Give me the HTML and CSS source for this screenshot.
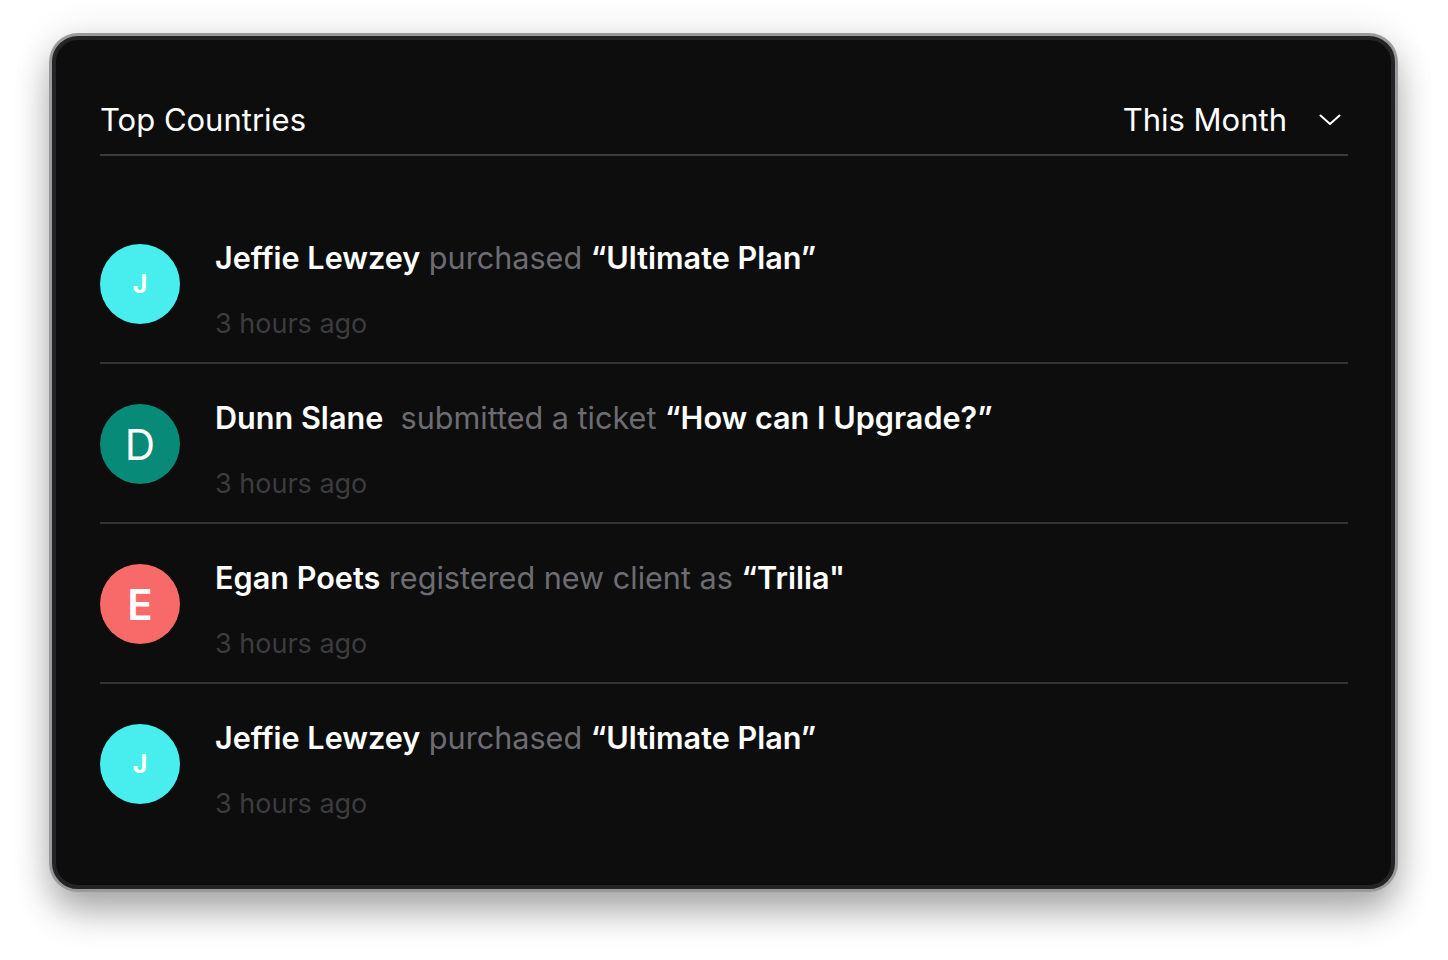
FILE: index.html
```html
<!DOCTYPE html>
<html lang="en">
<head>
  <meta charset="UTF-8">
  <title>Activity</title>
  <link rel="stylesheet" href="styles.css">
</head>
<body>
  <div class="card">
    <div class="card-header">
      <h2 class="card-title">Top Countries</h2>
      <div class="period">
        <span>This Month</span>
        <svg width="22" height="12" viewBox="0 0 22 12"><path d="M1.5 1.5 L11 10 L20.5 1.5" fill="none" stroke="#fff" stroke-width="2" stroke-linecap="round" stroke-linejoin="round"/></svg>
      </div>
    </div>

    <ul class="feed">
      <li class="feed-item">
        <div class="avatar avatar-cyan small-letter">J</div>
        <div class="feed-text">
          <p class="feed-line"><b>Jeffie Lewzey</b> <span class="action">purchased</span> <b>“Ultimate Plan”</b></p>
          <p class="feed-time">3 hours ago</p>
        </div>
      </li>
      <li class="feed-item">
        <div class="avatar avatar-teal thin-letter">D</div>
        <div class="feed-text">
          <p class="feed-line"><b>Dunn Slane</b>&nbsp; <span class="action">submitted a ticket</span> <b>“How can I Upgrade?”</b></p>
          <p class="feed-time">3 hours ago</p>
        </div>
      </li>
      <li class="feed-item">
        <div class="avatar avatar-coral">E</div>
        <div class="feed-text">
          <p class="feed-line"><b>Egan Poets</b> <span class="action">registered new client as</span> <b>“Trilia"</b></p>
          <p class="feed-time">3 hours ago</p>
        </div>
      </li>
      <li class="feed-item">
        <div class="avatar avatar-cyan small-letter">J</div>
        <div class="feed-text">
          <p class="feed-line"><b>Jeffie Lewzey</b> <span class="action">purchased</span> <b>“Ultimate Plan”</b></p>
          <p class="feed-time">3 hours ago</p>
        </div>
      </li>
    </ul>
  </div>
</body>
</html>
```

FILE: styles.css
```css
html {
  background-color: #fff;
}
body {
  margin: 0;
  padding: 36px 53px 71px 52px;
  font-family: Inter, "Noto Sans", sans-serif;
}
.card {
  height: 853px;
  box-sizing: border-box;
  padding: 0 43px 0 44px;
  background-color: #0d0d0d;
  border: 4px solid #242426;
  border-radius: 26px;
  box-shadow: 0 0 0 3px #9a9a9a, 0 22px 36px rgba(0, 0, 0, 0.32), 0 0 40px rgba(0, 0, 0, 0.12);
}
.card-header {
  display: flex;
  align-items: center;
  justify-content: space-between;
  padding: 60px 0 14px;
  border-bottom: 2px solid #3a3a3c;
}
.card-title {
  margin: 0;
  font-size: 31px;
  line-height: 40px;
  font-weight: 400;
  color: #fff;
}
.period {
  display: flex;
  align-items: center;
  gap: 32px;
  font-size: 31px;
  line-height: 40px;
  color: #fff;
}
.period svg {
  margin-right: 7px;
}
.feed {
  list-style: none;
  margin: 0;
  padding: 0;
  margin-top: 48px;
}
.feed-item {
  display: flex;
  gap: 35px;
  height: 160px;
  padding-top: 36px;
  box-sizing: border-box;
  border-bottom: 2px solid #333335;
}
.feed-item:last-child {
  border-bottom: none;
}
.avatar {
  flex: none;
  width: 80px;
  height: 80px;
  margin-top: 4px;
  border-radius: 50%;
  display: flex;
  align-items: center;
  justify-content: center;
  color: #fff;
  font-size: 42px;
  font-weight: 600;
}
.avatar-cyan {
  background-color: #48eeee;
}
.avatar-teal {
  background-color: #078a78;
}
.avatar-coral {
  background-color: #f86a6a;
}
.small-letter {
  font-size: 25px;
  font-weight: 700;
}
.thin-letter {
  font-weight: 400;
}
.feed-text p {
  margin: 0;
}
.feed-line {
  font-size: 30.6px;
  line-height: 36px;
  color: #fff;
}
.feed-line b {
  font-weight: 600;
}
.action {
  color: #6c6c72;
}
.feed-time {
  margin-top: 33px !important;
  font-size: 27px;
  line-height: 29px;
  color: #3c3c3f;
}
```
